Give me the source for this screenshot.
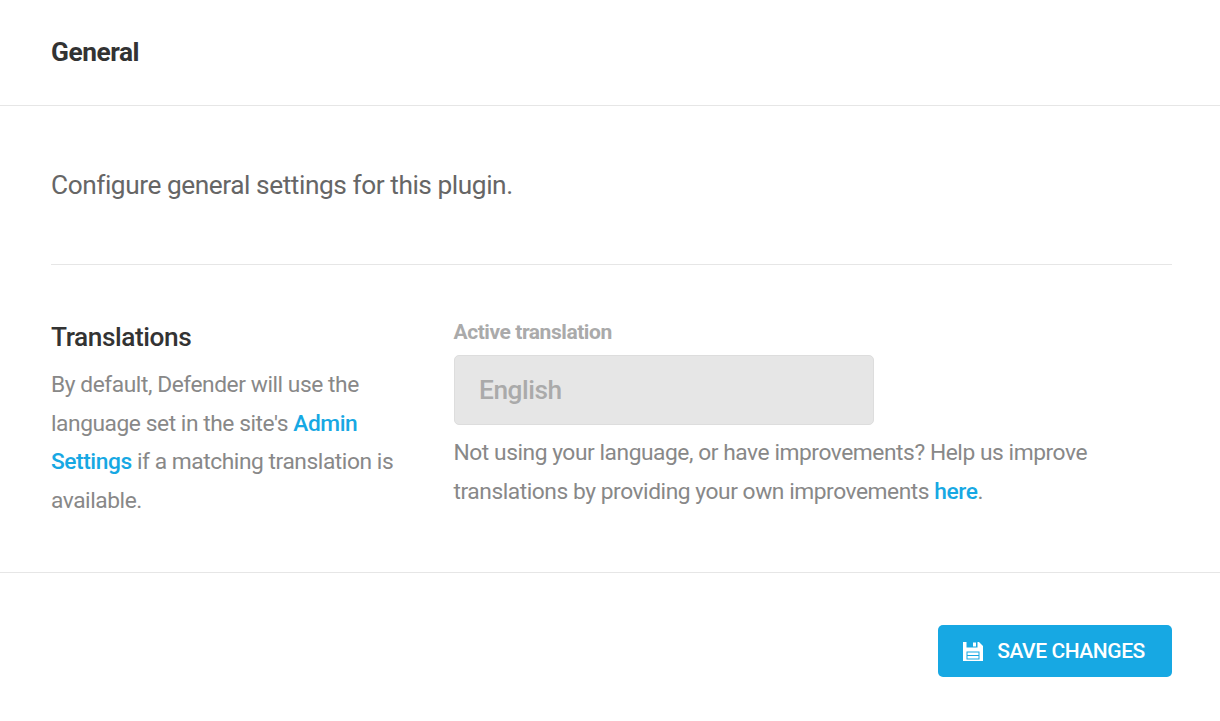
<div class="box">
  <header class="head"><h2>General</h2></header>
  <div class="body">
    <p class="intro">Configure general settings for this plugin.</p>
    <div class="row">
      <div class="left">
        <h3>Translations</h3>
        <p>By default, Defender will use the language set in the site's <a href="#a">Admin Settings</a> if a matching translation is available.</p>
      </div>
      <div class="right">
        <div class="label">Active translation</div>
        <div class="input">English</div>
        <p>Not using your language, or have improvements? Help us improve translations by providing your own improvements <a href="#a">here</a>.</p>
      </div>
    </div>
  </div>
  <footer class="foot">
    <button type="button">
      <svg width="20" height="19" viewBox="0 0 20 19" aria-hidden="true"><path fill="#fff" fill-rule="evenodd" d="M0 0h3.500v5.500h11V0h1.500l4 4V19H0zM10 .5h3v4h-3zM3.500 9.500V17.500h13V9.500zM4.500 10.500h11v2.500h-11zM4.500 14h11v2.500h-11z"/></svg>
      <span>SAVE CHANGES</span>
    </button>
  </footer>
</div>

<style>
  :global(body) { margin: 0; background: #fff; }
  .box { font-family: Roboto, sans-serif; color: #888; width: 1220px; height: 721px; box-sizing: border-box; letter-spacing: -0.4375px; }
  .head { height: 105px; border-bottom: 1px solid #e6e6e6; padding: 0 48px 0 51px; display: flex; align-items: center; }
  h2 { margin: 0 0 2px; font-size: 26.25px; font-weight: 700; color: #333; line-height: 30px; }
  .body { padding: 0 48px 0 51px; border-bottom: 1px solid #e6e6e6; height: 467px; box-sizing: border-box; }
  .intro { margin: 0; padding: 60px 0; height: 159px; box-sizing: border-box; border-bottom: 1px solid #e6e6e6; font-size: 26.25px; line-height: 38px; color: #666; }
  .row { display: flex; padding-top: 54px; }
  .left { width: 373px; margin-right: 30px; flex: none; }
  h3 { margin: 0 0 11px; font-size: 26.25px; font-weight: 500; line-height: 36px; color: #333; }
  p { margin: 0; }
  .left p, .right p { font-size: 22.75px; line-height: 38.5px; color: #888; }
  .right p { margin-left: -0.5px; }
  a { color: #17a8e3; text-decoration: none; font-weight: 500; }
  .label { font-size: 21px; font-weight: 700; color: #aaa; line-height: 26px; margin: 0 0 10px -0.5px; }
  .input { width: 420px; height: 70px; box-sizing: border-box; background: #e6e6e6; border: 1px solid #ddd; border-radius: 5px; padding: 0 24px; display: flex; align-items: center; font-size: 26.25px; font-weight: 500; color: #aaa; margin-bottom: 9px; }
  .foot { display: flex; justify-content: flex-end; padding: 52px 48px 0 0; }
  button { width: 234px; height: 52px; padding: 0 2px 0 0; background: #17a8e3; color: #fff; border: 0; border-radius: 5px; font: 500 21px Roboto, sans-serif; letter-spacing: -0.4375px; display: flex; align-items: center; justify-content: center; gap: 14px; }
</style>
